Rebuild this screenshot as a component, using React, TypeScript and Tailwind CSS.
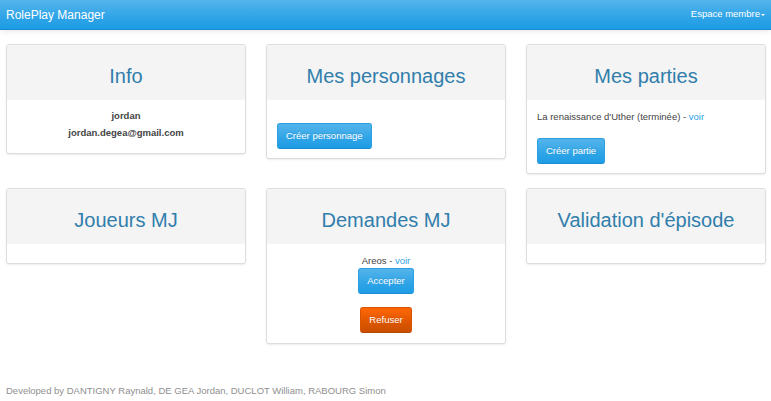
import React from "react";

const btnBlue =
  "inline-flex items-center h-[26px] px-[8px] rounded-[3px] text-white text-[9.5px] border border-[#2b9fe2] border-b-[#1b8fd2] bg-[linear-gradient(#54b4eb,#2fa4e7_60%,#1d9ce5)] [text-shadow:0_-1px_0_rgba(0,0,0,0.1)]";
const btnOrange =
  "inline-flex items-center h-[26px] px-[8px] rounded-[3px] text-white text-[9.5px] border border-[#d95400] border-b-[#b84700] bg-[linear-gradient(#ff6707,#dd5600_60%,#c94e00)] [text-shadow:0_-1px_0_rgba(0,0,0,0.1)]";

function Card({ title, children }: { title: string; children?: React.ReactNode }) {
  return (
    <div className="bg-white border border-[#dddddd] rounded-[3px] shadow-[0_1px_2px_rgba(0,0,0,0.08)] overflow-hidden">
      <div className="h-[55px] pt-[6px] bg-[#f4f4f4] flex items-center justify-center">
        <h2 className="text-[20px] text-[#317eac]">{title}</h2>
      </div>
      {children}
    </div>
  );
}

export default function App() {
  return (
    <div className="min-h-[401px] bg-white text-[#555555] font-['Liberation_Sans',Arial,sans-serif]">
      {/* Navbar */}
      <nav className="h-[30px] flex items-center justify-between px-[6px] bg-[linear-gradient(#54b4eb,#2fa4e7_60%,#1d9ce5)] border-b border-[#178acc] shadow-[0_1px_6px_rgba(0,0,0,0.1)]">
        <span className="text-white text-[12px]">RolePlay Manager</span>
        <span className="text-white text-[9.5px] flex items-center">
          Espace membre
          <span className="ml-[1px] w-0 h-0 border-l-[2px] border-r-[2px] border-t-[2px] border-l-transparent border-r-transparent border-t-white" />
        </span>
      </nav>

      <div className="grid grid-cols-3 gap-x-5 gap-y-[14px] items-start pl-[6px] pr-[5px] mt-[14px]">
        <Card title="Info">
          <div className="pt-[7px] pb-[12px] text-center text-[9.5px] font-bold leading-[17px] text-[#444]">
            <div>jordan</div>
            <div>jordan.degea@gmail.com</div>
          </div>
        </Card>

        <Card title="Mes personnages">
          <div className="pt-[22px] pb-[9px] px-[10px]">
            <button className={btnBlue}>Créer personnage</button>
          </div>
        </Card>

        <Card title="Mes parties">
          <div className="pt-[10px] pb-[9px] px-[10px] text-[9.5px]">
            <p className="leading-[14px] mb-[14px] text-[#444]">
              La renaissance d'Uther (terminée) - <span className="text-[#2fa4e7]">voir</span>
            </p>
            <button className={btnBlue}>Créer partie</button>
          </div>
        </Card>

        <Card title="Joueurs MJ">
          <div className="h-[19px]" />
        </Card>

        <Card title="Demandes MJ">
          <div className="pt-[10px] pb-[10px] flex flex-col items-center text-[9.5px]">
            <p className="leading-[14px] text-[#444]">
              Areos - <span className="text-[#2fa4e7]">voir</span>
            </p>
            <button className={btnBlue}>Accepter</button>
            <button className={btnOrange + " mt-[13px]"}>Refuser</button>
          </div>
        </Card>

        <Card title="Validation d'épisode">
          <div className="h-[19px]" />
        </Card>
      </div>

      <footer className="mt-[40px] pl-[6px] text-[9.5px] leading-[14px] text-[#8f8f8f]">
        Developed by DANTIGNY Raynald, DE GEA Jordan, DUCLOT William, RABOURG Simon
      </footer>
    </div>
  );
}
